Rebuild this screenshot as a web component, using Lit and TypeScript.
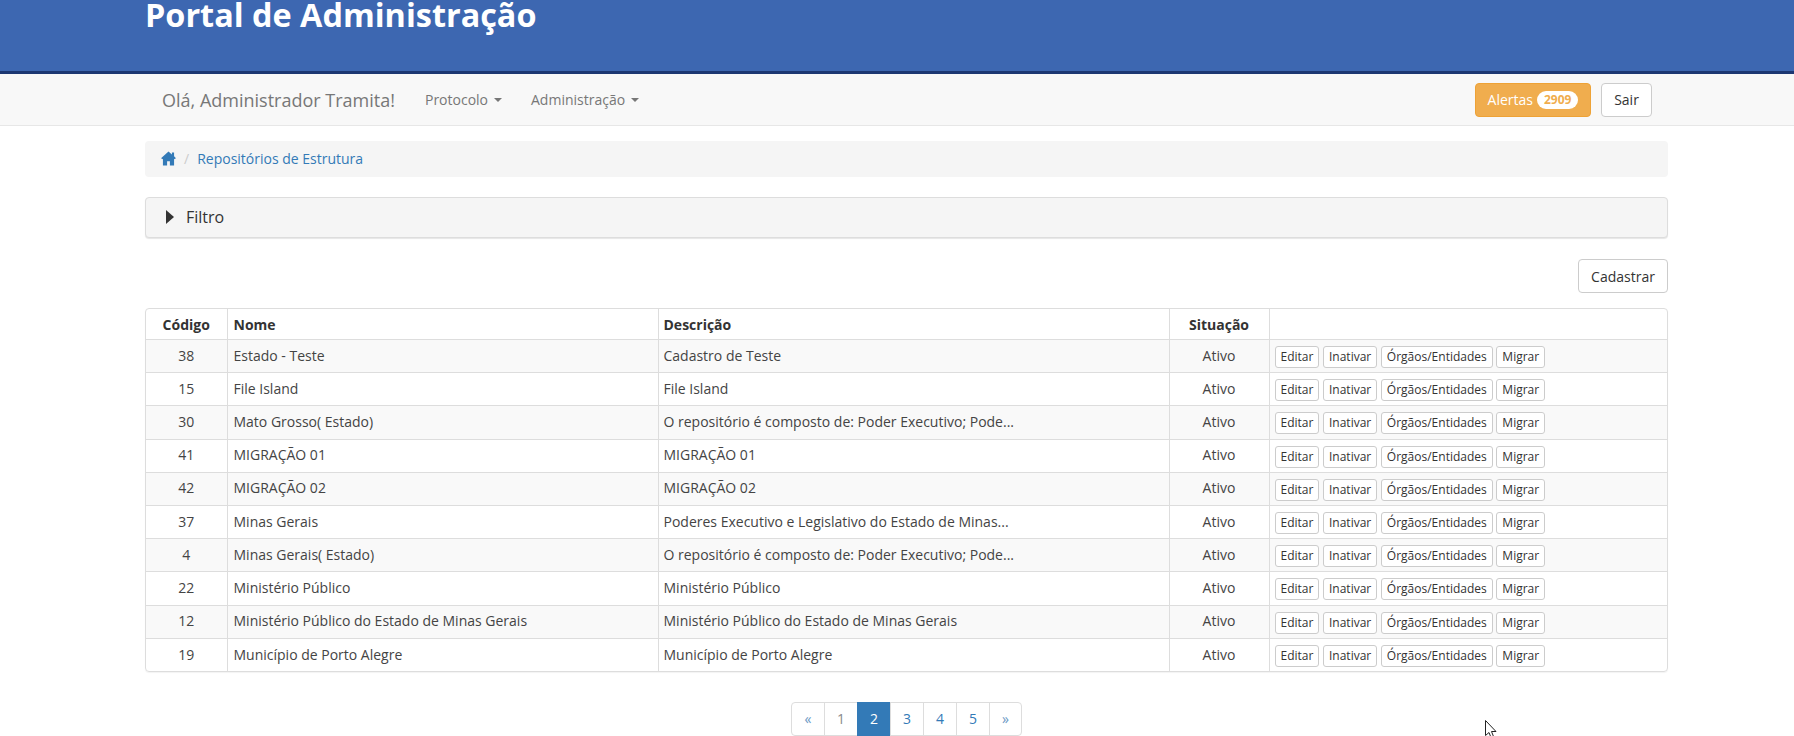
import {css, html, LitElement} from "lit";
import {customElement} from "lit/decorators.js";

const rows = [
	["38", "Estado - Teste", "Cadastro de Teste"],
	["15", "File Island", "File Island"],
	["30", "Mato Grosso( Estado)", "O repositório é composto de: Poder Executivo; Pode..."],
	["41", "MIGRAÇÃO 01", "MIGRAÇÃO 01"],
	["42", "MIGRAÇÃO 02", "MIGRAÇÃO 02"],
	["37", "Minas Gerais", "Poderes Executivo e Legislativo do Estado de Minas..."],
	["4", "Minas Gerais( Estado)", "O repositório é composto de: Poder Executivo; Pode..."],
	["22", "Ministério Público", "Ministério Público"],
	["12", "Ministério Público do Estado de Minas Gerais", "Ministério Público do Estado de Minas Gerais"],
	["19", "Município de Porto Alegre", "Município de Porto Alegre"],
];

const pages = ["«", "1", "2", "3", "4", "5", "»"];

@customElement("app-root")
export default class AppRoot extends LitElement {
	static styles = css`
		:host {
			display: block;
			position: relative;
			height: 736px;
			overflow: hidden;
			background: #fff;
			color: #333;
			font-family: "Open Sans", "Liberation Sans", sans-serif;
			font-size: 14px;
		}

		.wrap {
			width: 1523px;
			margin-left: 145px;
		}

		.top {
			height: 71px;
			background: #3d67b1;
			border-bottom: 3px solid #1d3772;
		}

		.top h1 {
			margin: 0;
			color: #fff;
			font-size: 32.4px;
			line-height: 28px;
			font-weight: 700;
		}

		.nav {
			height: 51px;
			background: #f8f8f8;
			border-bottom: 1px solid #e7e7e7;
		}

		.nav .wrap {
			display: flex;
			align-items: center;
			height: 100%;
		}

		.brand {
			margin-left: 17px;
			margin-right: 2px;
			font-size: 18px;
			color: #777;
		}

		.menu {
			display: flex;
			align-items: center;
			gap: 6px;
			margin-left: 28px;
			color: #777;
		}

		.menu + .menu {
			margin-left: 29px;
		}

		.caret {
			width: 0;
			height: 0;
			border-top: 4px solid #777;
			border-left: 4px solid transparent;
			border-right: 4px solid transparent;
		}

		.spacer {
			flex: 1;
		}

		.btn {
			box-sizing: border-box;
			display: flex;
			align-items: center;
			justify-content: center;
			height: 34px;
			border: 1px solid #ccc;
			border-radius: 4px;
			background: #fff;
			color: #333;
		}

		.alert {
			width: 116px;
			gap: 4px;
			background: #f0ad4e;
			border-color: #eea236;
			color: #fff;
		}

		.badge {
			padding: 0 7px;
			height: 18px;
			line-height: 18px;
			border-radius: 9px;
			background: #fff;
			color: #f0ad4e;
			font-size: 12px;
			font-weight: 700;
		}

		.exit {
			width: 51px;
			margin: 0 16px 0 10px;
		}

		.crumb {
			display: flex;
			align-items: center;
			height: 36px;
			margin-top: 15px;
			padding: 0 0 2px 16px;
			box-sizing: border-box;
			background: #f5f5f5;
			border-radius: 4px;
			color: #337ab7;
		}

		.crumb svg {
			width: 15px;
			height: 15px;
			fill: #337ab7;
		}

		.crumb .sep {
			margin: 0 8px 0 8px;
			color: #ccc;
		}

		.filter {
			display: flex;
			align-items: center;
			box-sizing: border-box;
			height: 41px;
			margin-top: 20px;
			padding: 0 0 2px 20px;
			background: #f5f5f5;
			border: 1px solid #ddd;
			border-radius: 4px;
			box-shadow: 0 1px 1px rgba(0, 0, 0, 0.1);
			font-size: 16px;
		}

		.tri {
			width: 0;
			height: 0;
			margin-right: 12px;
			border-left: 8px solid #333;
			border-top: 7px solid transparent;
			border-bottom: 7px solid transparent;
		}

		.actions {
			display: flex;
			justify-content: flex-end;
			margin-top: 21px;
		}

		.add {
			width: 90px;
		}

		.panel {
			margin-top: 15px;
			border: 1px solid #ddd;
			border-radius: 4px;
			box-shadow: 0 1px 1px rgba(0, 0, 0, 0.05);
			overflow: hidden;
		}

		table {
			width: 100%;
			table-layout: fixed;
			border-collapse: collapse;
			font-size: 14px;
		}

		col.c1 { width: 81px; }
		col.c2 { width: 431px; }
		col.c3 { width: 511px; }
		col.c4 { width: 100px; }

		th, td {
			padding: 0 6px;
			border-left: 1px solid #ddd;
			border-top: 1px solid #ddd;
			text-align: left;
			white-space: nowrap;
		}

		th:first-child, td:first-child {
			border-left: 0;
		}

		thead tr:first-child th {
			border-top: 0;
		}

		th {
			height: 30px;
			font-weight: 700;
		}

		td {
			height: 33.2px;
			padding-bottom: 2px;
			box-sizing: border-box;
			color: #444;
		}

		th.desc, td.desc {
			padding-left: 5px;
		}

		.mid {
			text-align: center;
		}

		tbody tr:nth-child(odd) {
			background: #f9f9f9;
		}

		td.btns {
			padding-left: 5px;
		}

		.ops {
			display: flex;
			gap: 3.6px;
			margin-top: 4px;
		}

		.mini {
			box-sizing: border-box;
			height: 22px;
			padding: 0 5px;
			line-height: 20px;
			border: 1px solid #ccc;
			border-radius: 3px;
			background: #fff;
			color: #333;
			font-family: inherit;
			font-size: 12px;
		}

		.pager {
			display: flex;
			justify-content: center;
			margin-top: 30px;
			padding-left: 1px;
		}

		.pager div {
			box-sizing: border-box;
			width: 34px;
			height: 34px;
			margin-left: -1px;
			line-height: 32px;
			text-align: center;
			border: 1px solid #ddd;
			color: #337ab7;
		}

		.pager div:first-child {
			border-radius: 4px 0 0 4px;
			color: #6b98c4;
		}

		.pager div:last-child {
			width: 33px;
			border-radius: 0 4px 4px 0;
			color: #6b98c4;
		}

		.pager div.one {
			color: #8a8a8a;
		}

		.pager div.on {
			background: #337ab7;
			border-color: #337ab7;
			color: #fff;
		}

		.cursor {
			position: absolute;
			left: 1485px;
			top: 720px;
			width: 12px;
			height: 18px;
		}
	`;

	render() {
		return html`
			<div class="top">
				<div class="wrap"><h1>Portal de Administração</h1></div>
			</div>
			<div class="nav">
				<div class="wrap">
					<span class="brand">Olá, Administrador Tramita!</span>
					<span class="menu">Protocolo <i class="caret"></i></span>
					<span class="menu">Administração <i class="caret"></i></span>
					<span class="spacer"></span>
					<div class="btn alert">Alertas <span class="badge">2909</span></div>
					<div class="btn exit">Sair</div>
				</div>
			</div>
			<div class="wrap">
				<div class="crumb">
					<svg viewBox="0 0 14 14"><path d="M7 0.5 L10.2 3.3 V1.5 H12.2 V5 L14 6.8 L12.2 7.6 V13.5 H8.3 V9.6 H5.7 V13.5 H1.8 V7.6 L0 6.8 Z"></path></svg>
					<span class="sep">/</span>
					<span>Repositórios de Estrutura</span>
				</div>
				<div class="filter"><i class="tri"></i>Filtro</div>
				<div class="actions"><div class="btn add">Cadastrar</div></div>
				<div class="panel">
					<table>
						<colgroup>
							<col class="c1" /><col class="c2" /><col class="c3" /><col class="c4" /><col />
						</colgroup>
						<thead>
							<tr>
								<th class="mid">Código</th>
								<th>Nome</th>
								<th class="desc">Descrição</th>
								<th class="mid">Situação</th>
								<th></th>
							</tr>
						</thead>
						<tbody>
							${rows.map(
								([code, name, desc]) => html`
									<tr>
										<td class="mid">${code}</td>
										<td>${name}</td>
										<td class="desc">${desc}</td>
										<td class="mid">Ativo</td>
										<td class="btns">
											<div class="ops">
												<button class="mini">Editar</button>
												<button class="mini">Inativar</button>
												<button class="mini">Órgãos/Entidades</button>
												<button class="mini">Migrar</button>
											</div>
										</td>
									</tr>
								`
							)}
						</tbody>
					</table>
				</div>
				<div class="pager">
					${pages.map(
						(p) => html`<div class="${p === "2" ? "on" : p === "1" ? "one" : ""}">${p}</div>`
					)}
				</div>
			</div>
			<svg class="cursor" viewBox="0 0 12 18">
				<path d="M0.5 0.5 V15.5 L4 12.5 L6 17.5 L8.5 16.5 L6.5 11.5 H11 Z" fill="#fff" stroke="#222" stroke-width="1"></path>
			</svg>
		`;
	}
}

declare global {
	interface HTMLElementTagNameMap {
		"app-root": AppRoot;
	}
}
